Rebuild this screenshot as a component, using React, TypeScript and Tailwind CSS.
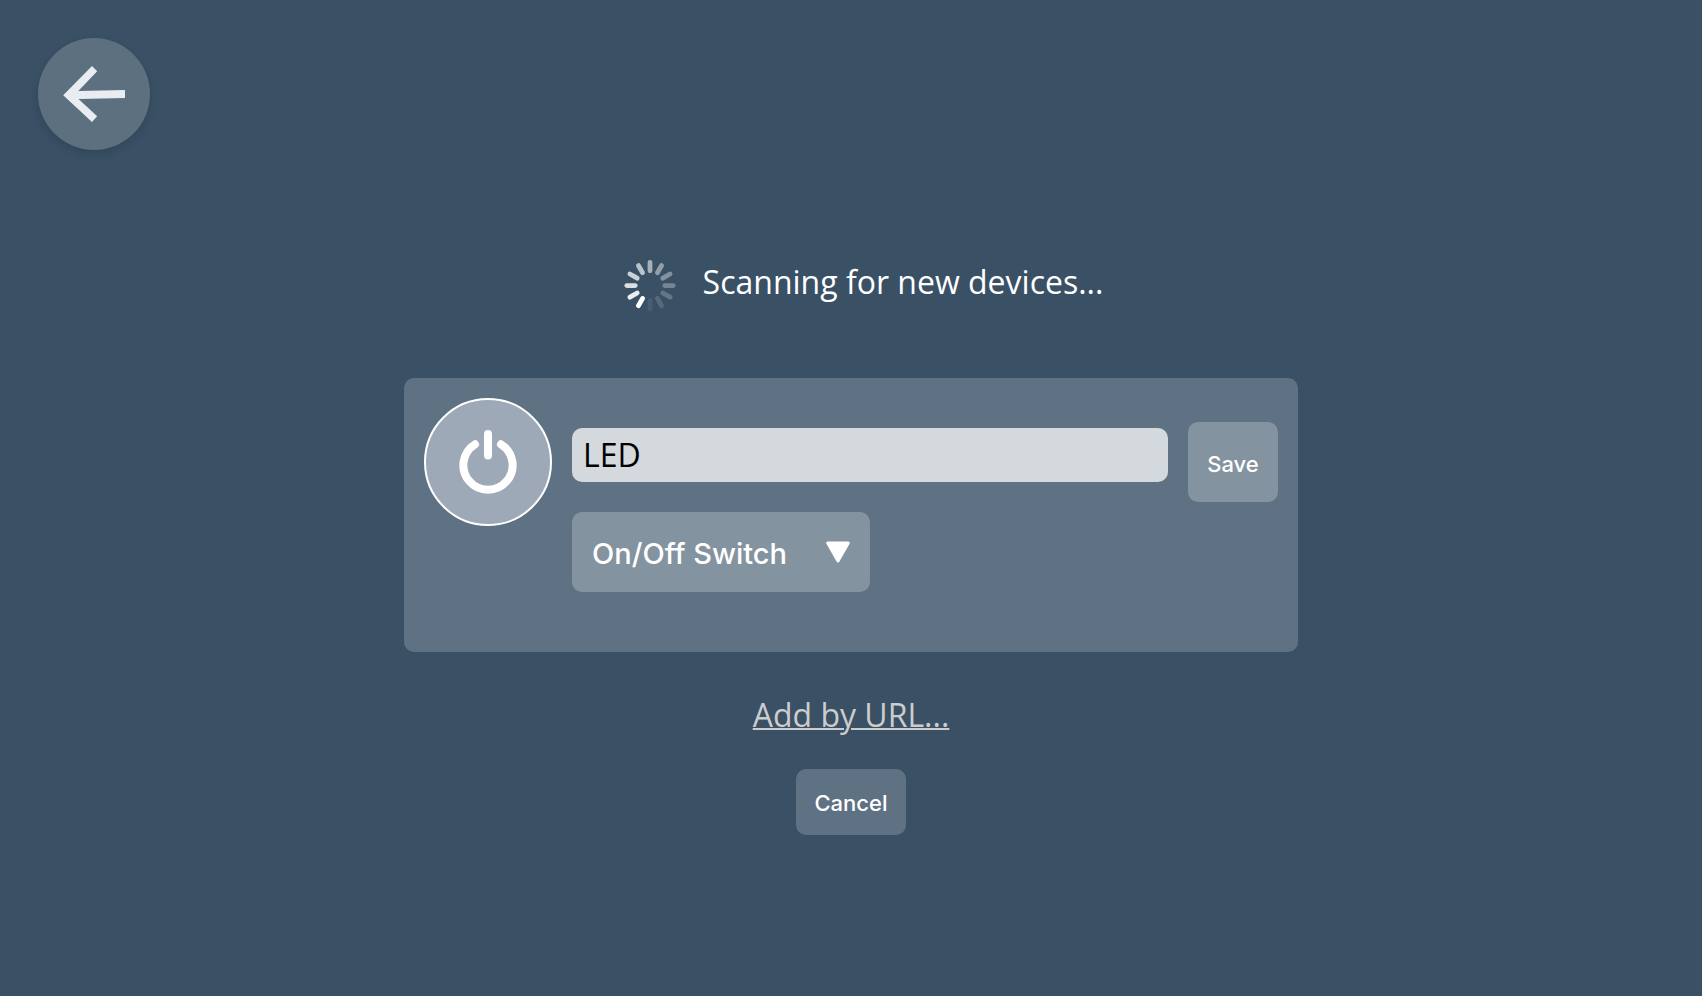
import { useState } from "react";

const SPOKES = [0.55, 0.45, 0.38, 0.3, 0.22, 0.15, 0.08, 1, 0.9, 0.82, 0.74, 0.66];

function BackIcon() {
  return (
    <svg viewBox="0 0 112 112" className="size-28" fill="#e9edf1" aria-hidden="true">
      <path d="M25.2 57.3 54 28.1 59.2 33.2 40.3 52.9 87 52V60L40.5 60.9 59.2 78.3 54 84Z" />
    </svg>
  );
}

function Spinner() {
  return (
    <svg viewBox="0 0 100 100" className="size-[100px]" stroke="#fff" strokeWidth="4.8" strokeLinecap="round" aria-hidden="true">
      {SPOKES.map((opacity, i) => (
        <line key={i} x1="51" y1="26.4" x2="51" y2="34.8" opacity={opacity} transform={`rotate(${i * 30} 51 49.6)`} />
      ))}
    </svg>
  );
}

function PowerIcon() {
  return (
    <svg viewBox="0 0 128 128" className="size-32" fill="none" aria-hidden="true">
      <circle cx="64" cy="64" r="63" fill="#9da9b6" stroke="#fff" strokeWidth="2" />
      <path d="M51 46.3A24.6 24.6 0 1 0 77 46.3M64 36V57.6" stroke="#fff" strokeWidth="8" strokeLinecap="round" />
    </svg>
  );
}

export default function App() {
  const [name, setName] = useState("LED");

  return (
    <div className="flex min-h-screen flex-col bg-[#395065] font-['Open_Sans',sans-serif] text-white">
      <header className="flex px-[38px] pt-[38px]">
        <button type="button" aria-label="Back" className="size-28 rounded-full bg-[#5c7080] shadow-[0_4px_8px_rgba(0,0,0,0.12)]">
          <BackIcon />
        </button>
      </header>

      <main className="flex flex-col items-center px-5 pt-[86px]">
        <div className="flex items-center justify-center gap-1" role="status">
          <Spinner />
          <p className="pb-2 text-[32px] leading-11">Scanning for new devices...</p>
        </div>

        <section className="mt-[42px] flex w-full max-w-[894px] items-start gap-5 rounded-[10px] bg-[#5f7283] px-5 pt-5 pb-[60px]">
          <PowerIcon />
          <div className="flex flex-1 flex-col items-start gap-[30px] pt-[30px]">
            <input
              aria-label="Device name"
              value={name}
              onChange={(e) => setName(e.target.value)}
              className="h-[54px] w-full rounded-[10px] bg-[#d4d9dd] px-[11px] pb-0.5 text-[32px] text-black outline-none"
            />
            <div className="relative w-[298px]">
              <select
                aria-label="Device type"
                className="h-20 w-full appearance-none rounded-[10px] bg-[#8493a0] px-5 pt-1 font-['Inter',sans-serif] text-[29px] font-medium text-white outline-none"
              >
                <option>On/Off Switch</option>
              </select>
              <svg viewBox="0 0 24 22" className="pointer-events-none absolute top-7 right-5 h-6 w-6" fill="#fff" stroke="#fff" strokeWidth="3" strokeLinejoin="round" aria-hidden="true">
                <path d="M1.7 2H22.3L12 20Z" />
              </svg>
            </div>
          </div>
          <button type="button" className="mt-6 h-20 w-[90px] rounded-[10px] bg-[#8493a0] pt-1 font-['Inter',sans-serif] text-[22px] font-medium">
            Save
          </button>
        </section>

        <a href="#" className="mt-[41px] text-[32px] leading-11 text-[#ccc] underline decoration-2">
          Add by URL...
        </a>
        <button type="button" className="mt-8 h-[66px] w-[110px] rounded-[10px] bg-[#5f7283] pt-0.5 font-['Inter',sans-serif] text-[22px] font-medium">
          Cancel
        </button>
      </main>
    </div>
  );
}
